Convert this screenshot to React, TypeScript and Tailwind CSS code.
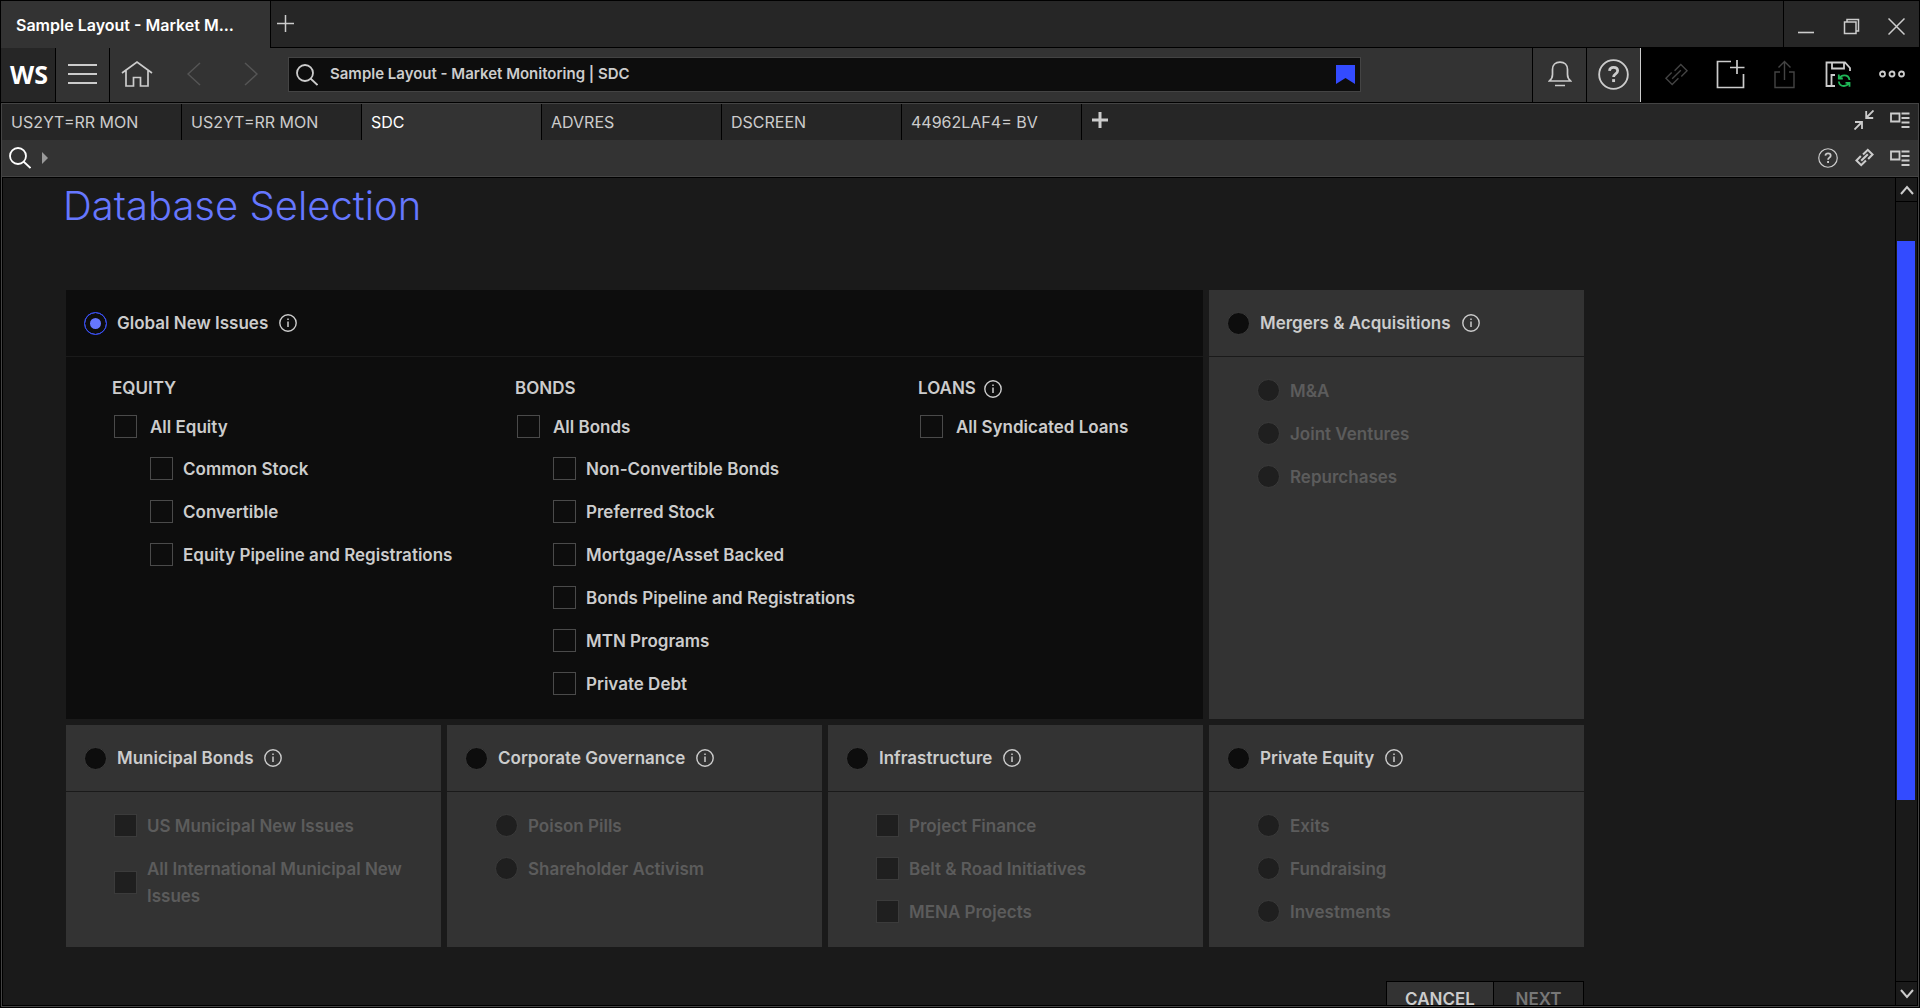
import React, { useState } from "react";

type IconProps = { className?: string };

function PlusThin({ className }: IconProps) {
  return (
    <svg className={className} width="17" height="17" viewBox="0 0 17 17" fill="none" stroke="currentColor" strokeWidth="1.5">
      <path d="M8.5 0v17M0 8.5h17" />
    </svg>
  );
}

function MinimizeIcon() {
  return (
    <svg width="17" height="17" viewBox="0 0 17 17" fill="none" stroke="currentColor" strokeWidth="1.6">
      <path d="M0 14.500h16" />
    </svg>
  );
}

function RestoreIcon() {
  return (
    <svg width="17" height="17" viewBox="0 0 17 17" fill="none" stroke="currentColor" strokeWidth="1.5">
      <path d="M1.5 4h11.5v11.5H1.5zM4 4V1.5h11.5V13H13" />
    </svg>
  );
}

function CloseIcon() {
  return (
    <svg width="17" height="17" viewBox="0 0 17 17" fill="none" stroke="currentColor" strokeWidth="1.5">
      <path d="M.5.5l16 16M16.5.5l-16 16" />
    </svg>
  );
}

function MenuIcon() {
  return (
    <svg width="29" height="22" viewBox="0 0 29 22" fill="none" stroke="currentColor" strokeWidth="2">
      <path d="M0 2h29M0 11h29M0 20h29" />
    </svg>
  );
}

function HomeIcon() {
  return (
    <svg width="32" height="28" viewBox="0 0 32 28" fill="none" stroke="currentColor" strokeWidth="1.7">
      <path d="M1 13L16 2l15 11M5 10.500V26h7.500v-8.500h7V26H27V10.500" />
    </svg>
  );
}

function ArrowLeftIcon() {
  return (
    <svg width="14" height="24" viewBox="0 0 14 24" fill="none" stroke="currentColor" strokeWidth="1.5">
      <path d="M13 1L1 12l12 11" />
    </svg>
  );
}

function ArrowRightIcon() {
  return (
    <svg width="14" height="24" viewBox="0 0 14 24" fill="none" stroke="currentColor" strokeWidth="1.5">
      <path d="M1 1l12 11L1 23" />
    </svg>
  );
}

function SearchIcon({ className }: IconProps) {
  return (
    <svg className={className} width="22" height="22" viewBox="0 0 22 22" fill="none" stroke="currentColor" strokeWidth="1.8">
      <circle cx="9" cy="9" r="8" />
      <path d="M14.500 14.500l7 6.500" />
    </svg>
  );
}

function BookmarkIcon() {
  return (
    <svg width="19" height="19" viewBox="0 0 19 19" fill="#334bff">
      <path d="M0 0h19v19l-9.500-6L0 19z" />
    </svg>
  );
}

function BellIcon() {
  return (
    <svg width="24" height="26" viewBox="0 0 24 26" fill="none" stroke="currentColor" strokeWidth="1.7">
      <path d="M1.500 20c2-1.800 3-3.500 3-6.500V8.500C4.500 4 7.500 1.200 12 1.200s7.500 2.800 7.500 7.300v5c0 3 1 4.700 3 6.500zM7 24.500h10" />
    </svg>
  );
}

function HelpIcon({ size }: { size: number }) {
  return (
    <svg width={size} height={size} viewBox="0 0 32 32" fill="none" stroke="currentColor">
      <circle cx="16" cy="16" r="14.800" strokeWidth="1.900" />
      <path d="M11.800 12.200c.3-2.200 1.900-3.500 4.300-3.500 2.500 0 4.200 1.400 4.200 3.500 0 3.200-4.200 3.100-4.200 6.400" strokeWidth="2.800" />
      <path d="M16.100 20.800v3" strokeWidth="3" />
    </svg>
  );
}

function LinkIcon({ size, weight }: { size: number; weight: number }) {
  return (
    <svg width={size} height={size} viewBox="0 0 26 26" fill="none" stroke="currentColor" strokeWidth={weight}>
      <path d="M11 9l6.500-6.500L24 9l-6 6M15 17l-6.500 6.500L2 17l6-6M8.500 17.500l9-9" />
    </svg>
  );
}

function NewWindowIcon() {
  return (
    <svg width="29" height="29" viewBox="0 0 29 29" fill="none" stroke="currentColor" strokeWidth="1.700">
      <path d="M15 1.500H1.500v26h26V14M21 0v14M14 7.500h14.500" />
    </svg>
  );
}

function ShareIcon() {
  return (
    <svg width="21" height="29" viewBox="0 0 21 29" fill="none" stroke="currentColor" strokeWidth="1.400">
      <path d="M6 12H1v15.500h19V12h-5M10.500 20V1.500M4.500 7.500l6-6 6 6" />
    </svg>
  );
}

function SaveSyncIcon() {
  return (
    <svg width="26" height="26" viewBox="0 0 26 26" fill="none" strokeWidth="1.800">
      <g stroke="currentColor">
        <path d="M10 25H1.500V1.500H20L25 7v3M7 1.500v6h12v-6M6.500 25V14H10" />
      </g>
      <g stroke="#1fb857">
        <path d="M24.500 19c-.4-2.900-2.500-4.600-5.200-4.600-2 0-3.700 1-4.600 2.700M13.800 13.500v4h4M13.800 20.500c.4 2.900 2.500 4.500 5.200 4.500 2 0 3.700-1 4.600-2.600M24.500 25.800v-4h-4" />
      </g>
    </svg>
  );
}

function MoreIcon() {
  return (
    <svg width="26" height="8" viewBox="0 0 26 8" fill="none" stroke="currentColor" strokeWidth="1.800">
      <circle cx="3.500" cy="4" r="2.500" />
      <circle cx="13" cy="4" r="2.500" />
      <circle cx="22.500" cy="4" r="2.500" />
    </svg>
  );
}

function CollapseIcon() {
  return (
    <svg width="20" height="20" viewBox="0 0 20 20" fill="none" stroke="currentColor" strokeWidth="1.800">
      <path d="M19.500.500l-7 7M12.200 1v7h7M.500 19.500l7-7M1 12h7v7" />
    </svg>
  );
}

function PanelIcon() {
  return (
    <svg width="20" height="16" viewBox="0 0 20 16" fill="none" stroke="currentColor" strokeWidth="1.800">
      <path d="M1 1.500h8.500v8H1zM11.500 1.500h8M11.500 6h8M11.500 10.500h8M11.500 15h8" />
    </svg>
  );
}

function InfoIcon() {
  return (
    <svg width="18" height="18" viewBox="0 0 18 18" fill="none" stroke="currentColor">
      <circle cx="9" cy="9" r="8.200" strokeWidth="1.400" />
      <path d="M9 7.500V13M9 4.500v1.600" strokeWidth="1.500" />
    </svg>
  );
}

function ScrollChevron({ className }: IconProps) {
  return (
    <svg className={className} width="14" height="10" viewBox="0 0 14 10" fill="none" stroke="currentColor" strokeWidth="2">
      <path d="M1 9l6-7 6 7" />
    </svg>
  );
}

function BarButton({ label, className, children }: { label: string; className: string; children: React.ReactNode }) {
  return (
    <button type="button" aria-label={label} className={"flex shrink-0 items-center justify-center " + className}>
      {children}
    </button>
  );
}

function TitleBar() {
  return (
    <header className="flex h-[47px] shrink-0 bg-[#262626]">
      <div className="flex w-[270px] shrink-0 items-center border-r border-black bg-[#333333] pl-[15px] text-[16px] font-semibold text-white">
        Sample Layout - Market M...
      </div>
      <div className="flex flex-1 items-center border-b border-black text-[#cccccc]">
        <BarButton label="New tab" className="w-7 pb-0.5">
          <PlusThin />
        </BarButton>
        <div className="ml-auto flex h-full border-l border-black">
          <BarButton label="Minimize" className="w-[45px] pt-1"><MinimizeIcon /></BarButton>
          <BarButton label="Restore" className="w-[45px] pt-1"><RestoreIcon /></BarButton>
          <BarButton label="Close" className="w-[45px] pt-1"><CloseIcon /></BarButton>
        </div>
      </div>
    </header>
  );
}

function Toolbar() {
  return (
    <div className="flex h-[55px] shrink-0 border-b border-black bg-[#333333] text-[#cccccc]">
      <div className="flex w-[55px] shrink-0 items-center justify-center border-r border-black bg-[#262626] pl-0.5 font-['Noto_Sans'] text-[25px] font-bold text-white">
        WS
      </div>
      <BarButton label="Menu" className="w-[54px] border-r border-black pb-0.5"><MenuIcon /></BarButton>
      <BarButton label="Home" className="w-[54px] pb-0.5"><HomeIcon /></BarButton>
      <BarButton label="Back" className="w-[60px] pb-0.5 text-[#555555]"><ArrowLeftIcon /></BarButton>
      <BarButton label="Forward" className="w-[54px] pb-0.5 text-[#555555]"><ArrowRightIcon /></BarButton>
      <div className="mt-[9px] mr-[171px] ml-2.5 flex h-[35px] flex-1 items-center border border-[#444444] bg-[#0d0d0d] pr-[5px] pl-[7px]">
        <SearchIcon />
        <input
          aria-label="Search"
          defaultValue="Sample Layout - Market Monitoring | SDC"
          className="ml-3 min-w-0 flex-1 bg-transparent text-[15px] font-semibold text-[#cccccc] outline-none"
        />
        <BarButton label="Bookmark" className=""><BookmarkIcon /></BarButton>
      </div>
      <BarButton label="Notifications" className="w-[54px] border-l border-black pb-0.5"><BellIcon /></BarButton>
      <BarButton label="Help" className="w-[54px] border-l border-black pb-0.5"><HelpIcon size={31} /></BarButton>
      <div className="flex shrink-0 border-l border-[#cccccc] bg-black pb-0.5 pl-2">
        <BarButton label="Link" className="w-[54px] text-[#444444]"><LinkIcon size={25} weight={1.4} /></BarButton>
        <BarButton label="New window" className="w-[54px]"><NewWindowIcon /></BarButton>
        <BarButton label="Share" className="w-[54px] text-[#444444]"><ShareIcon /></BarButton>
        <BarButton label="Save" className="w-[54px]"><SaveSyncIcon /></BarButton>
        <BarButton label="More" className="w-[54px]"><MoreIcon /></BarButton>
      </div>
    </div>
  );
}

const TABS = ["US2YT=RR MON", "US2YT=RR MON", "SDC", "ADVRES", "DSCREEN", "44962LAF4= BV"];

function LayoutTabs() {
  const [active, setActive] = useState(2);
  return (
    <nav className="flex h-9 shrink-0 bg-[#262626] text-[16px] text-[#cccccc]">
      {TABS.map((tab, i) => (
        <button
          key={i}
          type="button"
          onClick={() => setActive(i)}
          className={
            i === active
              ? "w-[180px] border-r border-black bg-[#333333] pl-[9px] text-left text-white"
              : "w-[180px] border-r border-black pl-[9px] text-left"
          }
        >
          {tab}
        </button>
      ))}
      <BarButton label="Add tab" className="w-9 pb-1">
        <svg width="16" height="16" viewBox="0 0 16 16" fill="none" stroke="currentColor" strokeWidth="3">
          <path d="M8 0v16M0 8h16" />
        </svg>
      </BarButton>
      <div className="ml-auto flex pb-1">
        <BarButton label="Collapse" className="w-9"><CollapseIcon /></BarButton>
        <BarButton label="Panel" className="w-9"><PanelIcon /></BarButton>
      </div>
    </nav>
  );
}

function AppSearchRow() {
  return (
    <div className="flex h-[37px] shrink-0 items-center border-b border-[#444444] bg-[#333333] pb-px text-[#cccccc]">
      <BarButton label="Find" className="ml-[7px] text-white"><SearchIcon /></BarButton>
      <svg className="ml-[11px] text-[#999999]" width="6" height="12" viewBox="0 0 6 12" fill="currentColor">
        <path d="M0 0l6 6-6 6z" />
      </svg>
      <div className="ml-auto flex">
        <BarButton label="Help" className="w-9"><HelpIcon size={20} /></BarButton>
        <BarButton label="Link" className="w-9"><LinkIcon size={19} weight={2.8} /></BarButton>
        <BarButton label="Panel" className="w-9"><PanelIcon /></BarButton>
      </div>
    </div>
  );
}

function Check({ label, gap, disabled }: { label: string; gap: string; disabled?: boolean }) {
  return (
    <label className={"flex items-center " + gap}>
      <input
        type="checkbox"
        disabled={disabled}
        className="mb-0.5 size-[23px] shrink-0 appearance-none border border-[#4a4a4a] bg-[#0d0d0d] checked:bg-[#334bff] disabled:border-[#3b3b3b] disabled:bg-[#1f1f1f]"
      />
      {label}
    </label>
  );
}

function SubRadio({ label, name }: { label: string; name: string }) {
  return (
    <label className="flex items-center gap-2.5">
      <input
        type="radio"
        name={name}
        disabled
        className="mb-0.5 size-[23px] shrink-0 appearance-none rounded-full border border-[#3b3b3b] bg-[#1f1f1f]"
      />
      {label}
    </label>
  );
}

type CardProps = {
  title: string;
  selected: string;
  onSelect: (title: string) => void;
  children: React.ReactNode;
};

function CardHeader({ title, selected, onSelect }: Omit<CardProps, "children">) {
  return (
    <div className="flex h-[67px] items-center gap-[11px] border-b border-[#1a1a1a] pl-[18px] text-[#cccccc]">
      <label className="flex items-center gap-2.5">
        <input
          type="radio"
          name="database"
          checked={selected === title}
          onChange={() => onSelect(title)}
          className="size-[23px] appearance-none rounded-full border border-[#3b3b3b] bg-[#0d0d0d] checked:border-[#334bff] checked:bg-[#6677ff] checked:shadow-[inset_0_0_0_5px_#0d0d0d]"
        />
        {title}
      </label>
      <InfoIcon />
    </div>
  );
}

function Card({ children, ...header }: CardProps) {
  return (
    <section className="bg-[#333333]">
      <CardHeader {...header} />
      <div className="flex flex-col gap-4 pt-[21px] pr-8 pb-[21px] pl-12 text-[#5c5c5c]">{children}</div>
    </section>
  );
}

const ISSUE_GROUPS = [
  { title: "EQUITY", all: "All Equity", items: ["Common Stock", "Convertible", "Equity Pipeline and Registrations"] },
  {
    title: "BONDS",
    all: "All Bonds",
    items: [
      "Non-Convertible Bonds",
      "Preferred Stock",
      "Mortgage/Asset Backed",
      "Bonds Pipeline and Registrations",
      "MTN Programs",
      "Private Debt",
    ],
  },
  { title: "LOANS", all: "All Syndicated Loans", items: [], info: true },
];

function DatabaseSelection() {
  const [selected, setSelected] = useState("Global New Issues");
  const pick = { selected, onSelect: setSelected };
  return (
    <main className="min-w-0 flex-1 overflow-hidden pt-1 pl-[60px]">
      <h1 className="text-[40px] leading-[48px] font-light text-[#6677ff]">Database Selection</h1>
      <div className="mt-[60px] ml-[3px] max-w-[1518px]">
        <div className="grid grid-cols-4 gap-1.5 text-[17px] leading-[27px] font-semibold">
          <section className="col-span-3 bg-[#0d0d0d] text-[#cccccc]">
            <CardHeader title="Global New Issues" {...pick} />
            <div className="flex pt-[18px] pb-[21px] pl-[46px]">
              {ISSUE_GROUPS.map((group) => (
                <div key={group.title} className="w-[403px] last:w-auto">
                  <h2 className="flex items-center gap-2">
                    {group.title}
                    {group.info && <InfoIcon />}
                  </h2>
                  <div className="mt-3 pl-0.5">
                    <Check label={group.all} gap="gap-[13px]" />
                    <div className="mt-[15px] flex flex-col gap-4 pl-9">
                      {group.items.map((item) => (
                        <Check key={item} label={item} gap="gap-2.5" />
                      ))}
                    </div>
                  </div>
                </div>
              ))}
            </div>
          </section>
          <Card title="Mergers & Acquisitions" {...pick}>
            <SubRadio name="mergers" label="M&A" />
            <SubRadio name="mergers" label="Joint Ventures" />
            <SubRadio name="mergers" label="Repurchases" />
          </Card>
          <Card title="Municipal Bonds" {...pick}>
            <Check disabled gap="gap-2.5" label="US Municipal New Issues" />
            <Check disabled gap="gap-2.5" label="All International Municipal New Issues" />
          </Card>
          <Card title="Corporate Governance" {...pick}>
            <SubRadio name="governance" label="Poison Pills" />
            <SubRadio name="governance" label="Shareholder Activism" />
          </Card>
          <Card title="Infrastructure" {...pick}>
            <Check disabled gap="gap-2.5" label="Project Finance" />
            <Check disabled gap="gap-2.5" label="Belt & Road Initiatives" />
            <Check disabled gap="gap-2.5" label="MENA Projects" />
          </Card>
          <Card title="Private Equity" {...pick}>
            <SubRadio name="private-equity" label="Exits" />
            <SubRadio name="private-equity" label="Fundraising" />
            <SubRadio name="private-equity" label="Investments" />
          </Card>
        </div>
        <div className="mt-[34px] flex justify-end text-[17px] font-semibold">
          <button type="button" className="h-[38px] w-[108px] border border-black bg-[#333333] text-[#cccccc]">
            CANCEL
          </button>
          <button type="button" disabled className="h-[38px] w-[90px] border border-l-0 border-black bg-[#262626] text-[#777777]">
            NEXT
          </button>
        </div>
      </div>
    </main>
  );
}

function ScrollRail() {
  return (
    <div className="flex w-[22px] shrink-0 flex-col border-l border-black bg-[#1a1a1a] text-[#cccccc]">
      <BarButton label="Scroll up" className="h-6 border-b border-black"><ScrollChevron /></BarButton>
      <div className="flex flex-1 flex-col pt-[39px] pr-0.5 pl-px">
        <div className="grow-[560] bg-[#334bff]" />
        <div className="grow-[181]" />
      </div>
      <BarButton label="Scroll down" className="h-6 border-t border-black"><ScrollChevron className="rotate-180" /></BarButton>
    </div>
  );
}

export default function App() {
  return (
    <div className="flex h-screen flex-col border border-black bg-[#1a1a1a] font-[Inter,sans-serif]">
      <TitleBar />
      <Toolbar />
      <div className="flex min-h-0 flex-1 flex-col border border-[#444444]">
        <LayoutTabs />
        <AppSearchRow />
        <div className="flex min-h-0 flex-1 border border-black">
          <DatabaseSelection />
          <ScrollRail />
        </div>
      </div>
    </div>
  );
}
